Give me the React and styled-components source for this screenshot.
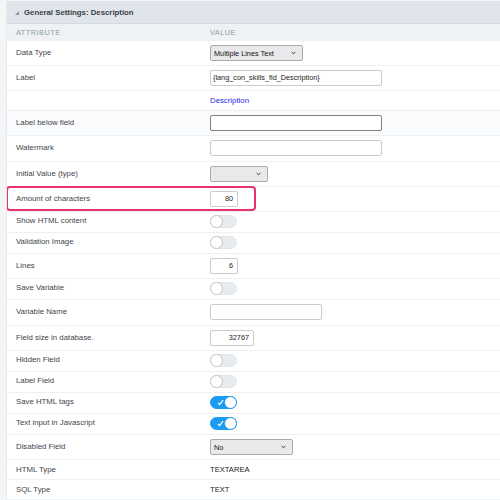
import React from 'react';
import styled, { createGlobalStyle } from 'styled-components';

const GlobalStyle = createGlobalStyle`
  html, body {
    margin: 0;
    padding: 0;
    background: #f3f5f7;
    font-family: "Liberation Sans", Arial, sans-serif;
  }
  #root {
    height: 500px;
    overflow: hidden;
  }
`;

const Panel = styled.div`
  margin: 1px 0 0 6px;
  background: #fff;
  border-left: 1px solid #e6eaee;
  height: 499px;
  overflow: hidden;
`;

const Header = styled.div`
  display: flex;
  align-items: center;
  gap: 5px;
  height: 22px;
  padding-left: 8px;
  background: #dfe5eb;
  border-bottom: 1px solid #d3dae1;
  font-size: 7.8px;
  font-weight: bold;
  color: #3a3f45;
`;

const Caret = styled.span`
  width: 0;
  height: 0;
  border-left: 4px solid transparent;
  border-bottom: 4px solid #8b96a1;
  margin-top: 1px;
`;

const ColHead = styled.div`
  display: grid;
  grid-template-columns: 194px 1fr;
  align-items: center;
  height: 17px;
  padding-left: 9px;
  background: #eef2f5;
  font-size: 7.4px;
  letter-spacing: 0.45px;
  color: #8d9aa7;
`;

const Row = styled.div`
  position: relative;
  box-sizing: border-box;
  display: grid;
  grid-template-columns: 194px 1fr;
  align-items: start;
  height: ${({ $h }) => $h || 25}px;
  padding: ${({ $pt }) => $pt ?? 4}px 0 0 9px;
  border-bottom: 1px solid #eef1f3;
  background: ${({ $shade }) => ($shade ? '#fafbfc' : '#fff')};
`;

const Label = styled.div`
  font-size: 7.8px;
  line-height: ${({ $lh }) => $lh || 14}px;
  color: #3f444a;
`;

const TextValue = styled.div`
  font-size: 7.6px;
  line-height: 14px;
  color: #222;
`;

const Link = styled.div`
  font-size: 7.8px;
  line-height: 14px;
  color: #2626ee;
`;

const Input = styled.div`
  box-sizing: border-box;
  width: ${({ $w }) => $w}px;
  height: 16px;
  border: 1px solid ${({ $dark }) => ($dark ? '#7d7f82' : '#c9ccd0')};
  border-radius: 2px;
  background: #fff;
  font-size: 7.3px;
  line-height: 14px;
  padding: 0 ${({ $right }) => ($right ? 4 : 2)}px;
  color: #222;
  text-align: ${({ $right }) => ($right ? 'right' : 'left')};
  white-space: nowrap;
  overflow: hidden;
`;

const Select = styled.div`
  box-sizing: border-box;
  display: flex;
  align-items: center;
  justify-content: space-between;
  width: ${({ $w }) => $w}px;
  height: 16px;
  border: 1px solid #a9abaf;
  border-radius: 2px;
  background: #e9e9ec;
  font-size: 7.3px;
  color: #111;
  padding: 0 6px 0 3px;
`;

const Chevron = () => (
  <svg width="5" height="4" viewBox="0 0 5 4">
    <path d="M0.7 1 L2.5 2.8 L4.3 1" fill="none" stroke="#222" strokeWidth="0.9" />
  </svg>
);

const Track = styled.div`
  position: relative;
  box-sizing: border-box;
  width: 27px;
  height: 13px;
  margin-top: 1px;
  border-radius: 7px;
  background: ${({ $on }) => ($on ? '#1b9cf2' : '#e9ecef')};
  border: 1px solid ${({ $on }) => ($on ? '#1b9cf2' : '#e1e5e8')};
`;

const Knob = styled.span`
  position: absolute;
  top: -1px;
  ${({ $on }) => ($on ? 'right: -1px;' : 'left: -1px;')}
  box-sizing: border-box;
  width: 13px;
  height: 13px;
  border-radius: 50%;
  background: #fff;
  border: 1px solid ${({ $on }) => ($on ? '#1b9cf2' : '#c3c6ca')};
`;

const Check = styled.svg`
  position: absolute;
  left: 6px;
  top: 2px;
`;

const Toggle = ({ on }) => (
  <Track $on={on}>
    {on && (
      <Check width="7" height="7" viewBox="0 0 7 7">
        <path d="M1 3.8 L2.7 5.5 L6 1.2" fill="none" stroke="#fff" strokeWidth="1.2" />
      </Check>
    )}
    <Knob $on={on} />
  </Track>
);

const Highlight = styled.div`
  position: absolute;
  left: -1px;
  top: -1px;
  width: 250px;
  height: 25px;
  box-sizing: border-box;
  border: 2px solid #e6336b;
  border-radius: 4px;
  pointer-events: none;
`;

export default function App() {
  return (
    <>
      <GlobalStyle />
      <Panel>
        <Header>
          <Caret />
          General Settings: Description
        </Header>
        <ColHead>
          <span>ATTRIBUTE</span>
          <span>VALUE</span>
        </ColHead>

        <Row>
          <Label $lh={15}>Data Type</Label>
          <Select $w={93}>Multiple Lines Text<Chevron /></Select>
        </Row>
        <Row>
          <Label $lh={15}>Label</Label>
          <Input $w={172}>{'{lang_con_skills_fld_Description}'}</Input>
        </Row>
        <Row $h={20} $pt={3}>
          <Label />
          <Link>Description</Link>
        </Row>
        <Row $shade>
          <Label $lh={15}>Label below field</Label>
          <Input $w={172} $dark />
        </Row>
        <Row $h={26}>
          <Label $lh={15}>Watermark</Label>
          <Input $w={172} />
        </Row>
        <Row>
          <Label $lh={15}>Initial Value (type)</Label>
          <Select $w={58}><span /><Chevron /></Select>
        </Row>
        <Row>
          <Highlight />
          <Label $lh={15}>Amount of characters</Label>
          <Input $w={28} $right>80</Input>
        </Row>
        <Row $h={21} $pt={2}>
          <Label>Show HTML content</Label>
          <Toggle />
        </Row>
        <Row $h={21} $pt={2}>
          <Label>Validation Image</Label>
          <Toggle />
        </Row>
        <Row>
          <Label $lh={15}>Lines</Label>
          <Input $w={28} $right>6</Input>
        </Row>
        <Row $h={21} $pt={2}>
          <Label>Save Variable</Label>
          <Toggle />
        </Row>
        <Row $h={26}>
          <Label $lh={15}>Variable Name</Label>
          <Input $w={112} />
        </Row>
        <Row>
          <Label $lh={15}>Field size in database.</Label>
          <Input $w={44} $right>32767</Input>
        </Row>
        <Row $h={21} $pt={2}>
          <Label>Hidden Field</Label>
          <Toggle />
        </Row>
        <Row $h={21} $pt={2}>
          <Label>Label Field</Label>
          <Toggle />
        </Row>
        <Row $h={21} $pt={2}>
          <Label>Save HTML tags</Label>
          <Toggle on />
        </Row>
        <Row $h={21} $pt={2}>
          <Label>Text input in Javascript</Label>
          <Toggle on />
        </Row>
        <Row>
          <Label $lh={15}>Disabled Field</Label>
          <Select $w={83}>No<Chevron /></Select>
        </Row>
        <Row $h={20} $pt={3}>
          <Label>HTML Type</Label>
          <TextValue>TEXTAREA</TextValue>
        </Row>
        <Row $h={20} $pt={3}>
          <Label>SQL Type</Label>
          <TextValue>TEXT</TextValue>
        </Row>
      </Panel>
    </>
  );
}
